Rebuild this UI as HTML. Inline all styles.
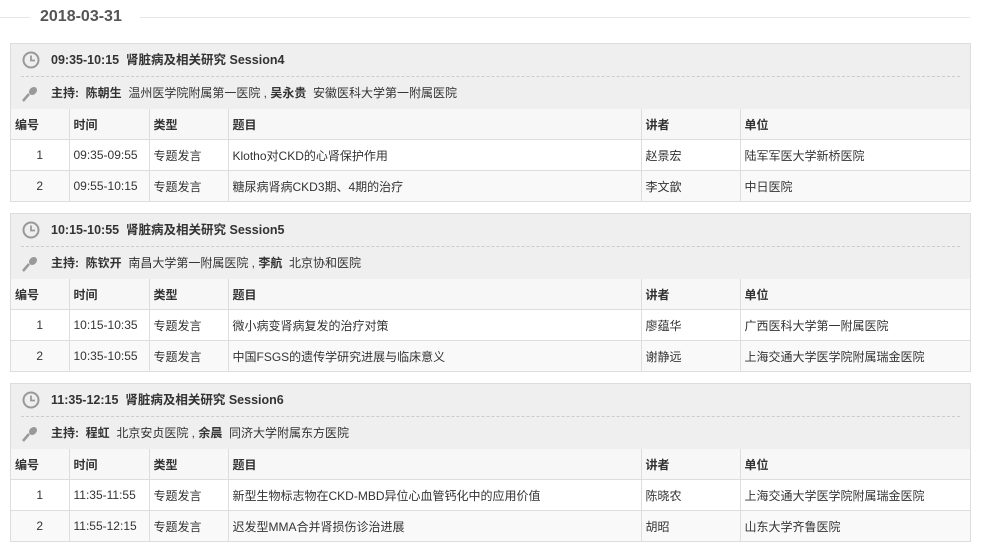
<!DOCTYPE html>
<html><head><meta charset="utf-8"><style>
body{margin:0;width:981px;height:548px;background:#fff;font-family:"Liberation Sans","Noto Sans CJK SC",sans-serif;font-size:12px;color:#333;overflow:hidden;position:relative}
.date{position:absolute;left:0;top:0;width:970px;height:34px}
.date .l{position:absolute;top:17px;height:1px;background:#e6e6e6}
.date span{position:absolute;left:40px;top:8px;font-size:16px;font-weight:bold;color:#555}
.panel{position:absolute;left:10px;width:959px;border:1px solid #ddd;background:#efefef}
.hd{height:32px;line-height:32px;padding-left:40px;font-weight:bold;position:relative;color:#333;font-size:12.5px}
.hd2{height:32px;line-height:32px;position:relative;border-top:1px dashed #ccc;margin:0 10px 0 10px;padding-left:30px}
.hd2 b{font-weight:bold}
table{border-collapse:collapse;width:959px;background:#fff;table-layout:fixed}
td{border:1px solid #ddd;height:30px;padding:0 4px;white-space:nowrap}
tr:first-child td{background:#f7f7f7;font-weight:bold;border-top:none}
tr.alt td{background:#f9f9f9}
td:first-child{border-left:none}td:last-child{border-right:none}
tr:last-child td{border-bottom:none}
.c{text-align:center}
</style></head><body>
<div class="date"><div class="l" style="left:0;width:30px"></div><div class="l" style="left:140px;width:830px"></div><span>2018-03-31</span></div>

<div class="panel" style="top:43px">
<div class="hd"><svg style="position:absolute;left:11px;top:7px" width="18" height="18" viewBox="0 0 18 18"><circle cx="9" cy="9" r="7.5" fill="none" stroke="#999" stroke-width="2"/><path d="M9 4.5V9.5H13" fill="none" stroke="#999" stroke-width="1.8"/></svg>09:35-10:15&nbsp; 肾脏病及相关研究 Session4</div>
<div class="hd2"><svg style="position:absolute;left:0;top:8px" width="18" height="18" viewBox="0 0 18 18"><path d="M2 16L8 9" stroke="#999" stroke-width="2.5"/><ellipse cx="12" cy="6" rx="4.5" ry="3.5" transform="rotate(-45 12 6)" fill="#999"/></svg><b>主持:&nbsp; 陈朝生</b>&nbsp; 温州医学院附属第一医院 , <b>吴永贵</b>&nbsp; 安徽医科大学第一附属医院</div>
<table><colgroup><col style="width:58px"><col style="width:80px"><col style="width:79px"><col style="width:413px"><col style="width:99px"><col></colgroup>
<tr><td>编号</td><td>时间</td><td>类型</td><td>题目</td><td>讲者</td><td>单位</td></tr>
<tr><td class="c">1</td><td>09:35-09:55</td><td>专题发言</td><td>Klotho对CKD的心肾保护作用</td><td>赵景宏</td><td>陆军军医大学新桥医院</td></tr>
<tr class="alt"><td class="c">2</td><td>09:55-10:15</td><td>专题发言</td><td>糖尿病肾病CKD3期、4期的治疗</td><td>李文歆</td><td>中日医院</td></tr>
</table></div>

<div class="panel" style="top:213px">
<div class="hd"><svg style="position:absolute;left:11px;top:7px" width="18" height="18" viewBox="0 0 18 18"><circle cx="9" cy="9" r="7.5" fill="none" stroke="#999" stroke-width="2"/><path d="M9 4.5V9.5H13" fill="none" stroke="#999" stroke-width="1.8"/></svg>10:15-10:55&nbsp; 肾脏病及相关研究 Session5</div>
<div class="hd2"><svg style="position:absolute;left:0;top:8px" width="18" height="18" viewBox="0 0 18 18"><path d="M2 16L8 9" stroke="#999" stroke-width="2.5"/><ellipse cx="12" cy="6" rx="4.5" ry="3.5" transform="rotate(-45 12 6)" fill="#999"/></svg><b>主持:&nbsp; 陈钦开</b>&nbsp; 南昌大学第一附属医院 , <b>李航</b>&nbsp; 北京协和医院</div>
<table><colgroup><col style="width:58px"><col style="width:80px"><col style="width:79px"><col style="width:413px"><col style="width:99px"><col></colgroup>
<tr><td>编号</td><td>时间</td><td>类型</td><td>题目</td><td>讲者</td><td>单位</td></tr>
<tr><td class="c">1</td><td>10:15-10:35</td><td>专题发言</td><td>微小病变肾病复发的治疗对策</td><td>廖蕴华</td><td>广西医科大学第一附属医院</td></tr>
<tr class="alt"><td class="c">2</td><td>10:35-10:55</td><td>专题发言</td><td>中国FSGS的遗传学研究进展与临床意义</td><td>谢静远</td><td>上海交通大学医学院附属瑞金医院</td></tr>
</table></div>

<div class="panel" style="top:383px">
<div class="hd"><svg style="position:absolute;left:11px;top:7px" width="18" height="18" viewBox="0 0 18 18"><circle cx="9" cy="9" r="7.5" fill="none" stroke="#999" stroke-width="2"/><path d="M9 4.5V9.5H13" fill="none" stroke="#999" stroke-width="1.8"/></svg>11:35-12:15&nbsp; 肾脏病及相关研究 Session6</div>
<div class="hd2"><svg style="position:absolute;left:0;top:8px" width="18" height="18" viewBox="0 0 18 18"><path d="M2 16L8 9" stroke="#999" stroke-width="2.5"/><ellipse cx="12" cy="6" rx="4.5" ry="3.5" transform="rotate(-45 12 6)" fill="#999"/></svg><b>主持:&nbsp; 程虹</b>&nbsp; 北京安贞医院 , <b>余晨</b>&nbsp; 同济大学附属东方医院</div>
<table><colgroup><col style="width:58px"><col style="width:80px"><col style="width:79px"><col style="width:413px"><col style="width:99px"><col></colgroup>
<tr><td>编号</td><td>时间</td><td>类型</td><td>题目</td><td>讲者</td><td>单位</td></tr>
<tr><td class="c">1</td><td>11:35-11:55</td><td>专题发言</td><td>新型生物标志物在CKD-MBD异位心血管钙化中的应用价值</td><td>陈晓农</td><td>上海交通大学医学院附属瑞金医院</td></tr>
<tr class="alt"><td class="c">2</td><td>11:55-12:15</td><td>专题发言</td><td>迟发型MMA合并肾损伤诊治进展</td><td>胡昭</td><td>山东大学齐鲁医院</td></tr>
</table></div>
</body></html>
